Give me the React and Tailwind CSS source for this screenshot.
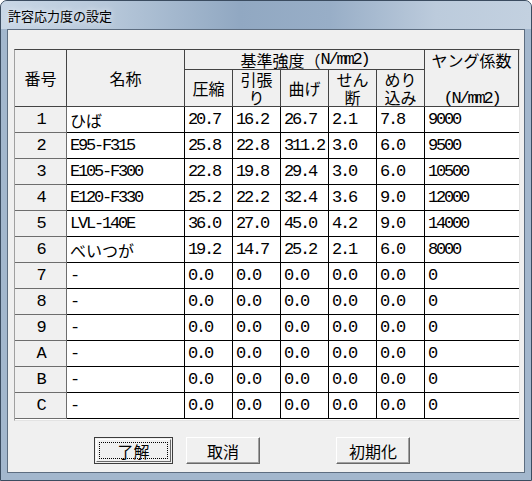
import React from "react";

const rows = [
  ["1", "ひば", "20.7", "16.2", "26.7", "2.1", "7.8", "9000"],
  ["2", "E95-F315", "25.8", "22.8", "311.2", "3.0", "6.0", "9500"],
  ["3", "E105-F300", "22.8", "19.8", "29.4", "3.0", "6.0", "10500"],
  ["4", "E120-F330", "25.2", "22.2", "32.4", "3.6", "9.0", "12000"],
  ["5", "LVL-140E", "36.0", "27.0", "45.0", "4.2", "9.0", "14000"],
  ["6", "べいつが", "19.2", "14.7", "25.2", "2.1", "6.0", "8000"],
  ["7", "-", "0.0", "0.0", "0.0", "0.0", "0.0", "0"],
  ["8", "-", "0.0", "0.0", "0.0", "0.0", "0.0", "0"],
  ["9", "-", "0.0", "0.0", "0.0", "0.0", "0.0", "0"],
  ["A", "-", "0.0", "0.0", "0.0", "0.0", "0.0", "0"],
  ["B", "-", "0.0", "0.0", "0.0", "0.0", "0.0", "0"],
  ["C", "-", "0.0", "0.0", "0.0", "0.0", "0.0", "0"],
];

const jp = "font-['Noto_Sans_CJK_JP',sans-serif]";
const mono = "font-['Liberation_Mono','Noto_Sans_CJK_JP',monospace] text-[17px] tracking-[-2.2px]";

function isAscii(text) {
  return /^[\x00-\x7f]+$/.test(text);
}

function CellText({ text }) {
  return <span className={isAscii(text) ? mono : jp}>{text}</span>;
}

// header text that is split over lines, one block per line
function Lines({ lines }) {
  return (
    <div className="flex flex-col items-center">
      {lines.map((line, i) => (
        <div key={i} className="h-[18px] leading-[18px] whitespace-nowrap">
          {line}
        </div>
      ))}
    </div>
  );
}

function Button({ label, primary }) {
  if (primary) {
    return (
      <div className="h-[27px] w-[79px] border border-[#3c3c3c] p-px">
        <div className="flex h-full w-full items-center justify-center border border-t-white border-l-white border-r-[#696969] border-b-[#696969] bg-[#f0f0f0] p-[2px]">
          <div className="flex h-full w-full items-center justify-center border border-dotted border-black text-[16px] leading-none text-black">
            <span className={jp}>{label}</span>
          </div>
        </div>
      </div>
    );
  }
  return (
    <div className="flex h-[27px] w-[74px] items-center justify-center border border-t-white border-l-white border-r-[#696969] border-b-[#696969] bg-[#f0f0f0] shadow-[inset_-1px_-1px_0_#a0a0a0] text-[16px] leading-none text-black">
      <span className={jp}>{label}</span>
    </div>
  );
}

export default function App() {
  const headCell = "flex items-center justify-center border-r border-b border-[#444] bg-[#f0f0f0] text-[16px] leading-[18px] text-black text-center";

  return (
    <div className="h-[481px] w-[532px] overflow-hidden bg-white">
      <div className="flex h-[481px] w-[532px] flex-col rounded-t-[7px] border border-[#3b4c60] bg-[#a3b7cd]">
        <div className="flex h-[28px] shrink-0 items-center rounded-t-[6px] bg-[linear-gradient(to_right,#c9d7e6_0%,#b7c8da_20%,#91a8c2_45%,#98aec7_62%,#bccbdc_82%,#c3d1e0_100%)] pl-[7px]">
          <span className={jp + " text-[13px] leading-none text-black [text-shadow:0_0_6px_#fff]"}>
            許容応力度の設定
          </span>
        </div>

        <div className="mx-[6px] flex h-[444px] flex-col border border-[#5d6d80] bg-[#f0f0f0] pl-[6px] pt-[19px]">
          <div className="h-[372px] w-[506px] overflow-hidden border-l border-t border-l-[#a0a0a0] border-t-[#444] border-r border-b border-r-[#e3e3e3] border-b-[#e3e3e3] bg-white">
            {/* header */}
            <div className={jp + " flex"}>
              <div className={headCell + " h-[57px] w-[52px]"}>番号</div>
              <div className={headCell + " h-[57px] w-[118px]"}>名称</div>
              <div className="flex w-[240px] flex-col">
                <div className={headCell + " h-[20px] w-[240px]"}>
                  <span>基準強度（</span>
                  <span className={mono}>N/mm2)</span>
                </div>
                <div className="flex">
                  <div className={headCell + " h-[37px] w-[48px]"}>圧縮</div>
                  <div className={headCell + " h-[37px] w-[48px]"}>
                    <Lines lines={["引張", "り"]} />
                  </div>
                  <div className={headCell + " h-[37px] w-[48px]"}>曲げ</div>
                  <div className={headCell + " h-[37px] w-[48px]"}>
                    <Lines lines={["せん", "断"]} />
                  </div>
                  <div className={headCell + " h-[37px] w-[48px]"}>
                    <Lines lines={["めり", "込み"]} />
                  </div>
                </div>
              </div>
              <div className={headCell + " h-[57px] w-[94px]"}>
                <Lines lines={["ヤング係数", "", <span key="u" className={mono}>(N/mm2)</span>]} />
              </div>
            </div>

            {/* rows */}
            {rows.map((row) => (
              <div key={row[0]} className="flex h-[26px]">
                <div className="flex h-[26px] w-[52px] shrink-0 items-center justify-center border-r border-b border-[#6d6d6d] bg-[#f0f0f0] text-[16px] text-black">
                  <span className={mono}>{row[0]}</span>
                </div>
                <div className="flex h-[26px] w-[118px] shrink-0 items-center border-r border-b border-black pl-[3px] text-[16px] text-black whitespace-nowrap">
                  <CellText text={row[1]} />
                </div>
                {row.slice(2, 7).map((value, i) => (
                  <div
                    key={i}
                    className="flex h-[26px] w-[48px] shrink-0 items-center overflow-hidden border-r border-b border-black pl-[3px] text-[16px] text-black whitespace-nowrap"
                  >
                    <CellText text={value} />
                  </div>
                ))}
                <div className="flex h-[26px] w-[94px] shrink-0 items-center border-b border-black pl-[3px] text-[16px] text-black">
                  <CellText text={row[7]} />
                </div>
              </div>
            ))}
          </div>

          <div className="mt-[16px] flex items-start pl-[80px]">
            <Button label="了解" primary />
            <div className="ml-[13px]">
              <Button label="取消" />
            </div>
            <div className="ml-[76px]">
              <Button label="初期化" />
            </div>
          </div>
        </div>
      </div>
    </div>
  );
}
